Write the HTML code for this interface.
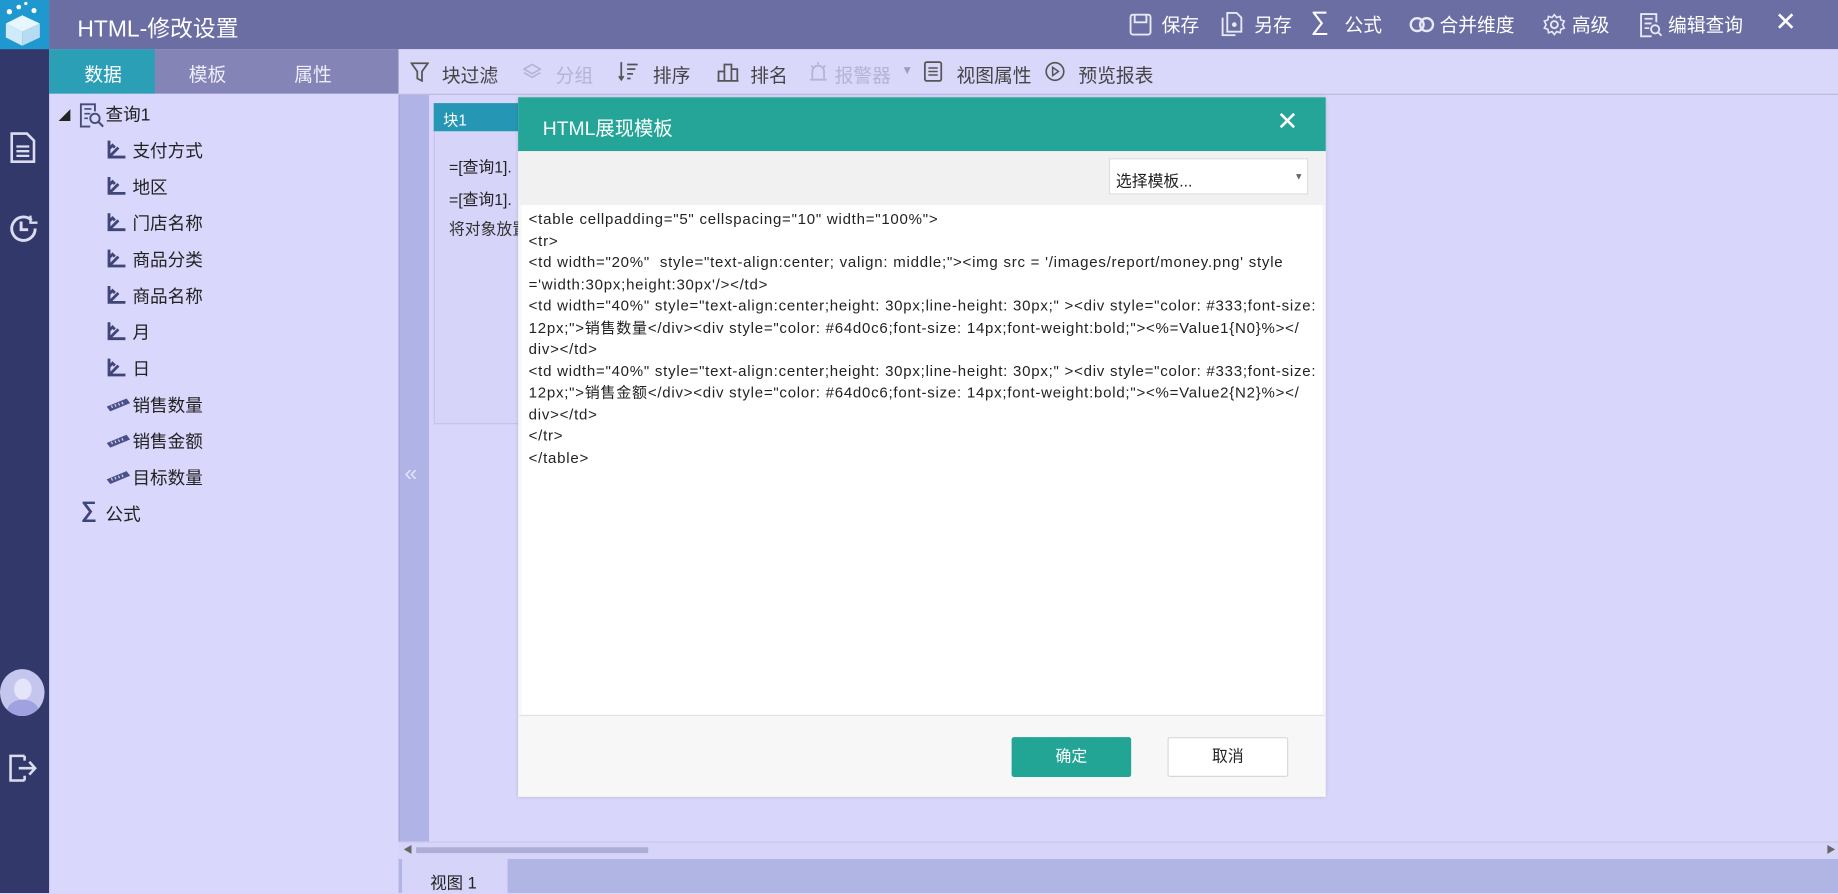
<!DOCTYPE html>
<html><head><meta charset="utf-8">
<style>
html,body{margin:0;padding:0;width:1838px;height:893px;overflow:hidden;background:#d8d6fa;}
#s{position:absolute;left:0;top:0;width:1568px;height:762px;transform:scale(1.17219,1.17192);transform-origin:0 0;font-family:"Liberation Sans","Noto Sans CJK SC",sans-serif;background:#d8d6fa;}
.a{position:absolute;}
.hd{color:#fff;font-size:16px;}
.tb{color:#444;font-size:16px;}
.dis{color:#b4b3d6;}
.tr{position:absolute;font-size:15px;color:#222;}
svg{display:block}
.code{position:absolute;left:451px;top:178px;font-size:12.8px;letter-spacing:0.65px;line-height:18.5px;color:#222;white-space:pre;}
</style></head><body><div id="s">
<div class="a" style="left:0;top:0;width:42px;height:762px;background:#33386a"></div>
<div class="a" style="left:0;top:0;width:42px;height:42px;background:#1f98cf">
<svg width="42" height="42" viewBox="0 0 42 42"><path d="M5 20 L19 13 L34 20 L19 27Z" fill="#e8f6ff"/><path d="M5 20 L19 27 L19 39 L5 32Z" fill="#cfeaf8"/><path d="M34 20 L19 27 L19 39 L34 32Z" fill="#b5dcf2"/><circle cx="8" cy="10" r="2.3" fill="#fff"/><circle cx="16" cy="6" r="2" fill="#fff"/><circle cx="29" cy="9" r="2.2" fill="#fff"/><circle cx="22" cy="3" r="1.4" fill="#fff"/></svg></div>
<svg class="a" style="left:8px;top:112px" width="24" height="28" viewBox="0 0 24 28"><path d="M2 2h13l6 6v18H2z" fill="none" stroke="#dcdcf0" stroke-width="2.2"/><path d="M6 13h11M6 17h11M6 21h11" stroke="#dcdcf0" stroke-width="2"/></svg>
<svg class="a" style="left:6px;top:181px" width="28" height="28" viewBox="0 0 28 28"><path d="M24 14a10 10 0 1 1-3-7" fill="none" stroke="#dcdcf0" stroke-width="2.5"/><path d="M12 8v7h6" fill="none" stroke="#dcdcf0" stroke-width="2.5"/><path d="M20 3v6h6" fill="none" stroke="#dcdcf0" stroke-width="2"/></svg>
<div class="a" style="left:0;top:571px;width:38px;height:40px;border-radius:50%;background:#c5c6ee;overflow:hidden"><div class="a" style="left:12px;top:8px;width:15px;height:18px;border-radius:50%;background:#e4e4fa"></div><div class="a" style="left:6px;top:26px;width:27px;height:20px;border-radius:50% 50% 0 0;background:#9fa2de"></div></div>
<svg class="a" style="left:7px;top:642px" width="26" height="26" viewBox="0 0 26 26"><path d="M14 3H2v21h12M14 7V3M14 24v-4" fill="none" stroke="#dcdcf0" stroke-width="2.2"/><path d="M9 13.5h14M18 8l5 5.5-5 5.5" fill="none" stroke="#dcdcf0" stroke-width="2.2"/></svg>
<div class="a" style="left:42px;top:0;width:1526px;height:42px;background:#6b6ea3"></div>
<div class="a hd" style="left:66px;top:8px;font-size:19.5px">HTML-修改设置</div>
<svg class="a" style="left:963px;top:11px" width="20" height="20" viewBox="0 0 20 20"><rect x="1.5" y="1.5" width="17" height="17" rx="2" fill="none" stroke="#e8e8f6" stroke-width="1.6"/><path d="M5 2v6h10V2" fill="none" stroke="#e8e8f6" stroke-width="1.6"/></svg>
<div class="a hd" style="left:991px;top:8px">保存</div>
<svg class="a" style="left:1042px;top:10px" width="18" height="21" viewBox="0 0 18 21"><path d="M5 1h8l4 4v12H5z M1 5v15h11" fill="none" stroke="#e8e8f6" stroke-width="1.6"/><circle cx="11" cy="11" r="2" fill="#e8e8f6"/></svg>
<div class="a hd" style="left:1070px;top:8px">另存</div>
<div class="a hd" style="left:1118px;top:5px;font-size:22px">∑</div>
<div class="a hd" style="left:1147px;top:8px">公式</div>
<svg class="a" style="left:1202px;top:13px" width="22" height="16" viewBox="0 0 22 16"><circle cx="7" cy="8" r="5.5" fill="none" stroke="#e8e8f6" stroke-width="2"/><circle cx="15" cy="8" r="5.5" fill="none" stroke="#e8e8f6" stroke-width="2"/></svg>
<div class="a hd" style="left:1228px;top:8px">合并维度</div>
<svg class="a" style="left:1316px;top:11px" width="20" height="20" viewBox="0 0 20 20"><circle cx="10" cy="10" r="3" fill="none" stroke="#e8e8f6" stroke-width="1.6"/><path d="M10 1.5l2 2.5 3-1 .5 3 3 1-1.5 3 1.5 3-3 1-.5 3-3-1-2 2.5-2-2.5-3 1-.5-3-3-1 1.5-3-1.5-3 3-1 .5-3 3 1z" fill="none" stroke="#e8e8f6" stroke-width="1.4"/></svg>
<div class="a hd" style="left:1341px;top:8px">高级</div>
<svg class="a" style="left:1398px;top:10px" width="20" height="22" viewBox="0 0 20 22"><path d="M15 9V2H2v19h9" fill="none" stroke="#e8e8f6" stroke-width="1.6"/><path d="M5 6h7M5 10h6M5 14h4" stroke="#e8e8f6" stroke-width="1.5"/><circle cx="14" cy="15" r="3.5" fill="none" stroke="#e8e8f6" stroke-width="1.6"/><path d="M16.5 17.5l3 3" stroke="#e8e8f6" stroke-width="1.6"/></svg>
<div class="a hd" style="left:1423px;top:8px">编辑查询</div>
<div class="a hd" style="left:1514px;top:6px;font-size:22px">✕</div>
<div class="a" style="left:42px;top:42px;width:298px;height:38px;background:#8584b6"></div>
<div class="a" style="left:42px;top:42px;width:90px;height:38px;background:#2a9fb6"></div>
<div class="a hd" style="left:72px;top:50px">数据</div>
<div class="a hd" style="left:161px;top:50px;color:#eeeefa">模板</div>
<div class="a hd" style="left:251px;top:50px;color:#eeeefa">属性</div>
<div class="a" style="left:42px;top:80px;width:298px;height:682px;background:#d9d7fb"></div>
<div class="a" style="left:50px;top:90px;font-size:10px;color:#222">◢</div>
<svg class="a" style="left:67px;top:87px" width="22" height="22" viewBox="0 0 22 22"><path d="M14 8V2H2v19h8" fill="none" stroke="#444a7a" stroke-width="1.6"/><path d="M5 6h6M5 10h5M5 14h3" stroke="#444a7a" stroke-width="1.4"/><circle cx="14" cy="14" r="4" fill="none" stroke="#444a7a" stroke-width="1.6"/><path d="M17 17l4 4" stroke="#444a7a" stroke-width="1.8"/></svg>
<div class="tr" style="left:90px;top:87px">查询1</div>
<svg class="a" style="left:90px;top:119px" width="18" height="18" viewBox="0 0 18 18"><path d="M3 1v14h14M3 15l8-8M3 8l3-3 2 2" fill="none" stroke="#3f4577" stroke-width="2.4"/></svg><div class="tr" style="left:113px;top:118px">支付方式</div>
<svg class="a" style="left:90px;top:150px" width="18" height="18" viewBox="0 0 18 18"><path d="M3 1v14h14M3 15l8-8M3 8l3-3 2 2" fill="none" stroke="#3f4577" stroke-width="2.4"/></svg><div class="tr" style="left:113px;top:149px">地区</div>
<svg class="a" style="left:90px;top:181px" width="18" height="18" viewBox="0 0 18 18"><path d="M3 1v14h14M3 15l8-8M3 8l3-3 2 2" fill="none" stroke="#3f4577" stroke-width="2.4"/></svg><div class="tr" style="left:113px;top:180px">门店名称</div>
<svg class="a" style="left:90px;top:212px" width="18" height="18" viewBox="0 0 18 18"><path d="M3 1v14h14M3 15l8-8M3 8l3-3 2 2" fill="none" stroke="#3f4577" stroke-width="2.4"/></svg><div class="tr" style="left:113px;top:211px">商品分类</div>
<svg class="a" style="left:90px;top:243px" width="18" height="18" viewBox="0 0 18 18"><path d="M3 1v14h14M3 15l8-8M3 8l3-3 2 2" fill="none" stroke="#3f4577" stroke-width="2.4"/></svg><div class="tr" style="left:113px;top:242px">商品名称</div>
<svg class="a" style="left:90px;top:274px" width="18" height="18" viewBox="0 0 18 18"><path d="M3 1v14h14M3 15l8-8M3 8l3-3 2 2" fill="none" stroke="#3f4577" stroke-width="2.4"/></svg><div class="tr" style="left:113px;top:273px">月</div>
<svg class="a" style="left:90px;top:305px" width="18" height="18" viewBox="0 0 18 18"><path d="M3 1v14h14M3 15l8-8M3 8l3-3 2 2" fill="none" stroke="#3f4577" stroke-width="2.4"/></svg><div class="tr" style="left:113px;top:304px">日</div>
<svg class="a" style="left:90px;top:338px" width="22" height="14" viewBox="0 0 22 14"><path d="M1 9L18 2l3 4L4 13z" fill="#4a5088"/><path d="M5 8l1 2M8 7l1 2M11 6l1 2M14 5l1 2" stroke="#d9d7fb" stroke-width="1"/></svg><div class="tr" style="left:113px;top:335px">销售数量</div>
<svg class="a" style="left:90px;top:369px" width="22" height="14" viewBox="0 0 22 14"><path d="M1 9L18 2l3 4L4 13z" fill="#4a5088"/><path d="M5 8l1 2M8 7l1 2M11 6l1 2M14 5l1 2" stroke="#d9d7fb" stroke-width="1"/></svg><div class="tr" style="left:113px;top:366px">销售金额</div>
<svg class="a" style="left:90px;top:400px" width="22" height="14" viewBox="0 0 22 14"><path d="M1 9L18 2l3 4L4 13z" fill="#4a5088"/><path d="M5 8l1 2M8 7l1 2M11 6l1 2M14 5l1 2" stroke="#d9d7fb" stroke-width="1"/></svg><div class="tr" style="left:113px;top:397px">目标数量</div>
<div class="a" style="left:69px;top:425px;font-size:19px;color:#3f4577;font-weight:bold">∑</div><div class="tr" style="left:90px;top:428px">公式</div>
<div class="a" style="left:340px;top:42px;width:1228px;height:38px;background:#d9d7fa;border-bottom:1px solid #b9b8e0"></div>
<svg class="a" style="left:350px;top:53px" width="16" height="17" viewBox="0 0 16 17"><path d="M1 1h14l-5 7v8l-4-2V8z" fill="none" stroke="#555" stroke-width="1.5"/></svg>
<div class="a tb" style="left:377px;top:51px">块过滤</div>
<svg class="a" style="left:446px;top:54px" width="16" height="15" viewBox="0 0 16 15"><path d="M8 1l7 4-7 4-7-4z M1 8l7 4 7-4" fill="none" stroke="#b4b3d6" stroke-width="1.4"/></svg>
<div class="a tb dis" style="left:474px;top:51px">分组</div>
<svg class="a" style="left:527px;top:52px" width="18" height="18" viewBox="0 0 18 18"><path d="M3 1v15M1 13l2 3 2-3M8 3h9M8 7h7M8 11h5M8 15h3" fill="none" stroke="#555" stroke-width="1.5"/></svg>
<div class="a tb" style="left:557px;top:51px">排序</div>
<svg class="a" style="left:611px;top:52px" width="20" height="18" viewBox="0 0 20 18"><path d="M1 17h18M2 9h5v8H2zM7 3h6v14H7zM13 7h5v10h-5z" fill="none" stroke="#555" stroke-width="1.5"/></svg>
<div class="a tb" style="left:640px;top:51px">排名</div>
<svg class="a" style="left:689px;top:52px" width="18" height="18" viewBox="0 0 18 18"><path d="M4 15V9a5 5 0 0 1 10 0v6M2 16h14M9 1v2M3 4l1.5 1.5M15 4l-1.5 1.5" fill="none" stroke="#b4b3d6" stroke-width="1.5"/></svg>
<div class="a tb dis" style="left:712px;top:51px">报警器</div>
<div class="a" style="left:769px;top:55px;font-size:10px;color:#9a9ac4">▼</div>
<svg class="a" style="left:788px;top:52px" width="16" height="18" viewBox="0 0 16 18"><rect x="1" y="1" width="14" height="16" rx="1.5" fill="none" stroke="#555" stroke-width="1.5"/><path d="M4 6h8M4 9h8M4 12h8" stroke="#555" stroke-width="1.3"/></svg>
<div class="a tb" style="left:816px;top:51px">视图属性</div>
<svg class="a" style="left:891px;top:52px" width="18" height="18" viewBox="0 0 18 18"><circle cx="9" cy="9" r="7.5" fill="none" stroke="#555" stroke-width="1.4"/><path d="M7 5.5l5 3.5-5 3.5z" fill="none" stroke="#555" stroke-width="1.3"/></svg>
<div class="a tb" style="left:920px;top:51px">预览报表</div>
<div class="a" style="left:340px;top:81px;width:25px;height:637px;background:#b0b3e6;border-left:1px solid #a0a2d6"></div>
<div class="a" style="left:345px;top:393px;font-size:20px;color:#e2e2f8">«</div>
<div class="a" style="left:370px;top:88px;width:120px;height:272px;background:#d6d4f8;border:1px solid #c4c3ea"></div>
<div class="a" style="left:370px;top:88px;width:120px;height:24px;background:#2597b4"></div>
<div class="a" style="left:378px;top:92px;font-size:13px;color:#fff">块1</div>
<div class="a" style="left:383px;top:131px;font-size:13.5px;color:#222">=[查询1].</div>
<div class="a" style="left:383px;top:159px;font-size:13.5px;color:#222">=[查询1].</div>
<div class="a" style="left:383px;top:184px;font-size:13.5px;color:#333">将对象放置</div>
<div class="a" style="left:442px;top:83px;width:689px;height:597px;background:#f7f7f7;box-shadow:0 0 3px rgba(0,0,0,.15)"></div>
<div class="a" style="left:442px;top:83px;width:689px;height:46px;background:#25a597"></div>
<div class="a" style="left:463px;top:96px;font-size:16.5px;color:#fff">HTML展现模板</div>
<div class="a" style="left:1089px;top:91px;font-size:22px;color:#fff">✕</div>
<div class="a" style="left:443px;top:129px;width:687px;height:46px;background:#f1f1f1"></div>
<div class="a" style="left:946px;top:135px;width:170px;height:31px;background:#fff;border:1px solid #ddd;box-sizing:border-box"></div>
<div class="a" style="left:952px;top:143px;font-size:13.5px;color:#222">选择模板...</div>
<div class="a" style="left:1104px;top:146px;font-size:8px;color:#666">▼</div>
<div class="a" style="left:445px;top:175px;width:683px;height:435px;background:#fff"></div>
<div class="code">&lt;table cellpadding="5" cellspacing="10" width="100%"&gt;
&lt;tr&gt;
&lt;td width="20%"  style="text-align:center; valign: middle;"&gt;&lt;img src = '/images/report/money.png' style
='width:30px;height:30px'/&gt;&lt;/td&gt;
&lt;td width="40%" style="text-align:center;height: 30px;line-height: 30px;" &gt;&lt;div style="color: #333;font-size:
12px;"&gt;销售数量&lt;/div&gt;&lt;div style="color: #64d0c6;font-size: 14px;font-weight:bold;"&gt;&lt;%=Value1{N0}%&gt;&lt;/
div&gt;&lt;/td&gt;
&lt;td width="40%" style="text-align:center;height: 30px;line-height: 30px;" &gt;&lt;div style="color: #333;font-size:
12px;"&gt;销售金额&lt;/div&gt;&lt;div style="color: #64d0c6;font-size: 14px;font-weight:bold;"&gt;&lt;%=Value2{N2}%&gt;&lt;/
div&gt;&lt;/td&gt;
&lt;/tr&gt;
&lt;/table&gt;</div>
<div class="a" style="left:443px;top:610px;width:687px;height:1px;background:#e2e2e2"></div>
<div class="a" style="left:863px;top:629px;width:102px;height:34px;background:#22a594;border-radius:2px;color:#fff;font-size:13.5px;text-align:center;line-height:34px">确定</div>
<div class="a" style="left:996px;top:629px;width:103px;height:34px;background:#fff;border:1px solid #d8d8d8;box-sizing:border-box;border-radius:2px;color:#222;font-size:13.5px;text-align:center;line-height:32px">取消</div>
<div class="a" style="left:340px;top:718px;width:1228px;height:14px;background:#d6d4f8;border-top:1px solid #c8c7ec"></div>
<div class="a" style="left:344px;top:720px;font-size:8px;color:#666">◀</div>
<div class="a" style="left:355px;top:723px;width:198px;height:5px;background:#aeadd8"></div>
<div class="a" style="left:1558px;top:720px;font-size:8px;color:#666">▶</div>
<div class="a" style="left:340px;top:733px;width:1228px;height:29px;background:#b0b5e4"></div>
<div class="a" style="left:343px;top:733px;width:90px;height:29px;background:#d6d4f8"></div>
<div class="a" style="left:367px;top:743px;font-size:14px;color:#222">视图 1</div>
</div></body></html>
